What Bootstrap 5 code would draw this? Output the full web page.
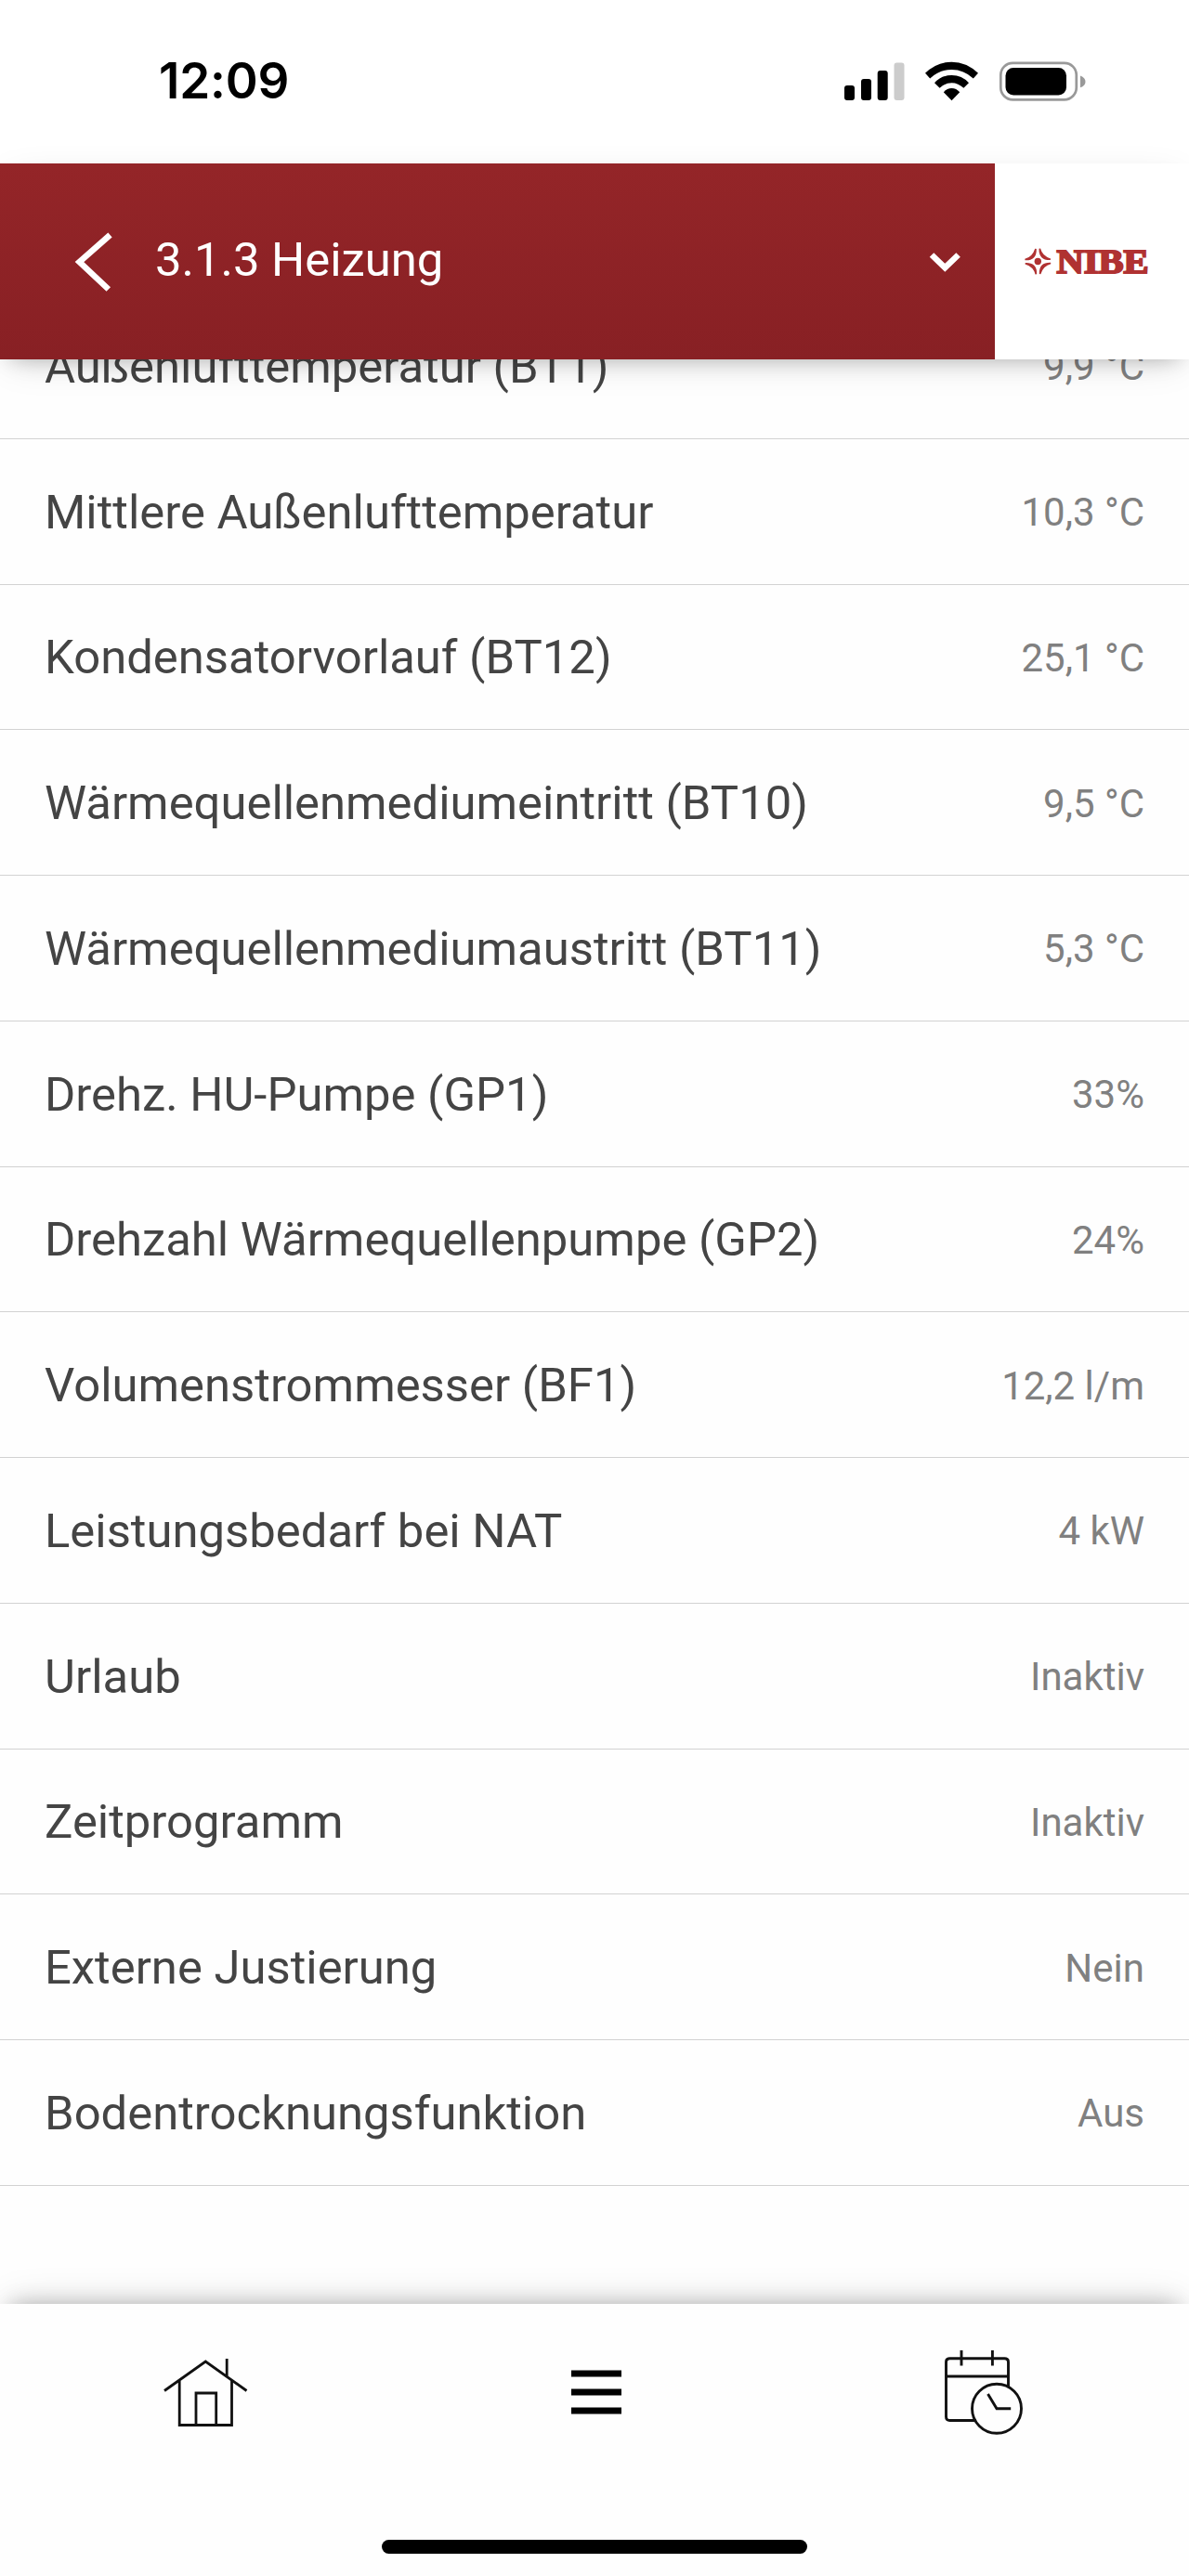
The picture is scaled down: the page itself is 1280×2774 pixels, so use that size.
<!DOCTYPE html>
<html lang="de">
<head>
<meta charset="utf-8">
<meta name="viewport" content="width=device-width, initial-scale=1">
<title>3.1.3 Heizung</title>
<link href="https://cdn.jsdelivr.net/npm/bootstrap@5.3.0/dist/css/bootstrap.min.css" rel="stylesheet">
<style>
  html, body { height: 2774px; }
  body { background: #fefefe; font-family: Roboto, "Liberation Sans", sans-serif; overflow: hidden; }
  svg { display: block; flex: none; overflow: visible; }
  .status { height: 176px; background: #fff; padding: 0 110px 0 171px; }
  .clock { font: 600 53px/1 Inter, sans-serif; color: #000; margin-top: -1px; letter-spacing: -.2px; }
  .topbar { height: 211px; z-index: 2; background: #fff; box-shadow: 0 10px 22px -12px rgba(0,0,0,.28), 0 10px 40px -10px rgba(0,0,0,.14); }
  .titlebar { width: 1070.5px; background: linear-gradient(#942528, #882024); color: #fff; padding: 0 37px 0 81px; }
  .title { font-size: 50.8px; line-height: 1; margin-left: 45px; padding-bottom: 2px; }
  .brand { padding-left: 31.5px; }
  .viewport { background: #fefefe; }
  .entries { margin-top: -71px; }
  .entry { height: 156.75px; border-bottom: 1.4px solid #d2d2d2; padding: 3px 48px 0; flex: none; }
  .entry-name { font-size: 50.8px; line-height: 1; color: #444; }
  .entry-value { font-size: 42px; line-height: 1; color: #808080; }
  .tabs { height: 293.5px; z-index: 2; background: #fefefe; box-shadow: 0 -10px 22px -12px rgba(0,0,0,.28), 0 -10px 40px -10px rgba(0,0,0,.14); }
  .tabrow { padding: 49px 178px 0 176px; }
  .home-bar { width: 458px; height: 15px; background: #000; margin-bottom: 24px; }
</style>
</head>
<body class="d-flex flex-column m-0">
  <header class="status d-flex align-items-center justify-content-between flex-shrink-0">
    <span class="clock">12:09</span>
    <svg width="262" height="44" viewBox="908 64 262 44" role="img" aria-label="Status">
      <rect x="909" y="90" width="11" height="16" rx="3"/>
      <rect x="927" y="83" width="11" height="23" rx="3"/>
      <rect x="944.7" y="74" width="11" height="32" rx="3"/>
      <rect x="962.5" y="65.5" width="11" height="40.5" rx="3" fill="#ccc"/>
      <path d="M996 76.8Q1008.500 64.700 1024.500 64.700T1053 76.800L1047.800 82.600Q1037.800 73 1024.500 73T1001.200 82.600Z"/>
      <path d="M1006 87.200Q1013.500 79 1024.500 79T1043 87.200L1037.400 92.800Q1031.500 87.200 1024.500 87.200T1011.600 92.800Z"/>
      <path d="M1015.800 97.300Q1019.500 92.900 1024.500 92.900T1033.200 97.300L1024.500 106.200Z"/>
      <rect x="1077.300" y="65.800" width="81.500" height="39.500" rx="13" fill="none" stroke="#999" stroke-width="2.700"/>
      <rect x="1082.500" y="71" width="65.500" height="29.500" rx="8.500"/>
      <path d="M1163 79.500Q1168.500 81.500 1168.500 86T1163 92.300Z" fill="#999"/>
    </svg>
  </header>

  <nav class="topbar d-flex position-relative flex-shrink-0">
    <div class="titlebar d-flex align-items-center">
      <svg width="41" height="66" viewBox="81 248 41 66" fill="none" stroke="#fff" stroke-width="6.500"><path d="M118.500 252L85.500 281L116.800 310.500"/></svg>
      <span class="title">3.1.3 Heizung</span>
      <svg class="ms-auto" width="34" height="24" viewBox="999 269 34 24" fill="none" stroke="#fff" stroke-width="6.500"><path d="M1002 273.500L1016.300 287.300L1030.600 273.500"/></svg>
    </div>
    <div class="brand flex-fill d-flex align-items-center">
      <svg width="137" height="32" viewBox="1102 265 137 32" fill="#b03232">
        <circle cx="1117.300" cy="280.500" r="3.700"/>
        <path id="ray" d="M1115 267Q1112 276.500 1103.500 278.500Q1115.500 279 1115 267Z" stroke="#b03232" stroke-width="1.600"/>
        <use href="#ray" transform="rotate(90 1117.300 280.500)"/>
        <use href="#ray" transform="rotate(180 1117.300 280.500)"/>
        <use href="#ray" transform="rotate(270 1117.300 280.500)"/>
        <text x="1137.500" y="292.500" font-family="Liberation Serif, serif" font-weight="700" font-size="36" textLength="99" lengthAdjust="spacingAndGlyphs" stroke="#b03232" stroke-width="2">NIBE</text>
      </svg>
    </div>
  </nav>

  <main class="viewport flex-fill overflow-hidden">
    <ul class="entries list-unstyled d-flex flex-column mb-0">
      <li class="entry d-flex align-items-center justify-content-between"><span class="entry-name">Außenlufttemperatur (BT1)</span><span class="entry-value">9,9 °C</span></li>
      <li class="entry d-flex align-items-center justify-content-between"><span class="entry-name">Mittlere Außenlufttemperatur</span><span class="entry-value">10,3 °C</span></li>
      <li class="entry d-flex align-items-center justify-content-between"><span class="entry-name">Kondensatorvorlauf (BT12)</span><span class="entry-value">25,1 °C</span></li>
      <li class="entry d-flex align-items-center justify-content-between"><span class="entry-name">Wärmequellenmediumeintritt (BT10)</span><span class="entry-value">9,5 °C</span></li>
      <li class="entry d-flex align-items-center justify-content-between"><span class="entry-name">Wärmequellenmediumaustritt (BT11)</span><span class="entry-value">5,3 °C</span></li>
      <li class="entry d-flex align-items-center justify-content-between"><span class="entry-name">Drehz. HU-Pumpe (GP1)</span><span class="entry-value">33%</span></li>
      <li class="entry d-flex align-items-center justify-content-between"><span class="entry-name">Drehzahl Wärmequellenpumpe (GP2)</span><span class="entry-value">24%</span></li>
      <li class="entry d-flex align-items-center justify-content-between"><span class="entry-name">Volumenstrommesser (BF1)</span><span class="entry-value">12,2 l/m</span></li>
      <li class="entry d-flex align-items-center justify-content-between"><span class="entry-name">Leistungsbedarf bei NAT</span><span class="entry-value">4 kW</span></li>
      <li class="entry d-flex align-items-center justify-content-between"><span class="entry-name">Urlaub</span><span class="entry-value">Inaktiv</span></li>
      <li class="entry d-flex align-items-center justify-content-between"><span class="entry-name">Zeitprogramm</span><span class="entry-value">Inaktiv</span></li>
      <li class="entry d-flex align-items-center justify-content-between"><span class="entry-name">Externe Justierung</span><span class="entry-value">Nein</span></li>
      <li class="entry d-flex align-items-center justify-content-between"><span class="entry-name">Bodentrocknungsfunktion</span><span class="entry-value">Aus</span></li>
    </ul>
  </main>

  <footer class="tabs d-flex flex-column justify-content-between align-items-center position-relative flex-shrink-0">
    <div class="tabrow d-flex justify-content-between w-100">
      <svg width="91" height="92" viewBox="176 2530 91 92" fill="none" stroke="#111" stroke-width="2.800">
        <path d="M177 2574.500L221.300 2543L265.500 2574.500M244.200 2540V2559M193.200 2563V2611.500H249.500V2563M211 2611.500V2577H232.700V2611.500"/>
      </svg>
      <svg width="54" height="92" viewBox="613 2530 54 92">
        <path d="M613 2552.600h54v6.800h-54zM613 2572.500h54v7h-54zM613 2592.400h54v7h-54z"/>
      </svg>
      <svg width="85" height="92" viewBox="1017 2530 85 92" fill="none" stroke="#111" stroke-width="2.900">
        <path d="M1051 2606.500H1022.500Q1018.500 2606.500 1018.500 2602.500V2543.700Q1018.500 2539.700 1022.500 2539.700H1081.500Q1085.500 2539.700 1085.500 2543.700V2570M1018.500 2559H1085.500M1035 2531V2547.500M1068.400 2531V2547.500"/>
        <circle cx="1073" cy="2593.700" r="26.500"/>
        <path d="M1063.500 2578L1073 2593.700H1088.200"/>
      </svg>
    </div>
    <div class="home-bar rounded-pill"></div>
  </footer>
<script src="https://cdn.jsdelivr.net/npm/bootstrap@5.3.0/dist/js/bootstrap.bundle.min.js"></script>
</body>
</html>
